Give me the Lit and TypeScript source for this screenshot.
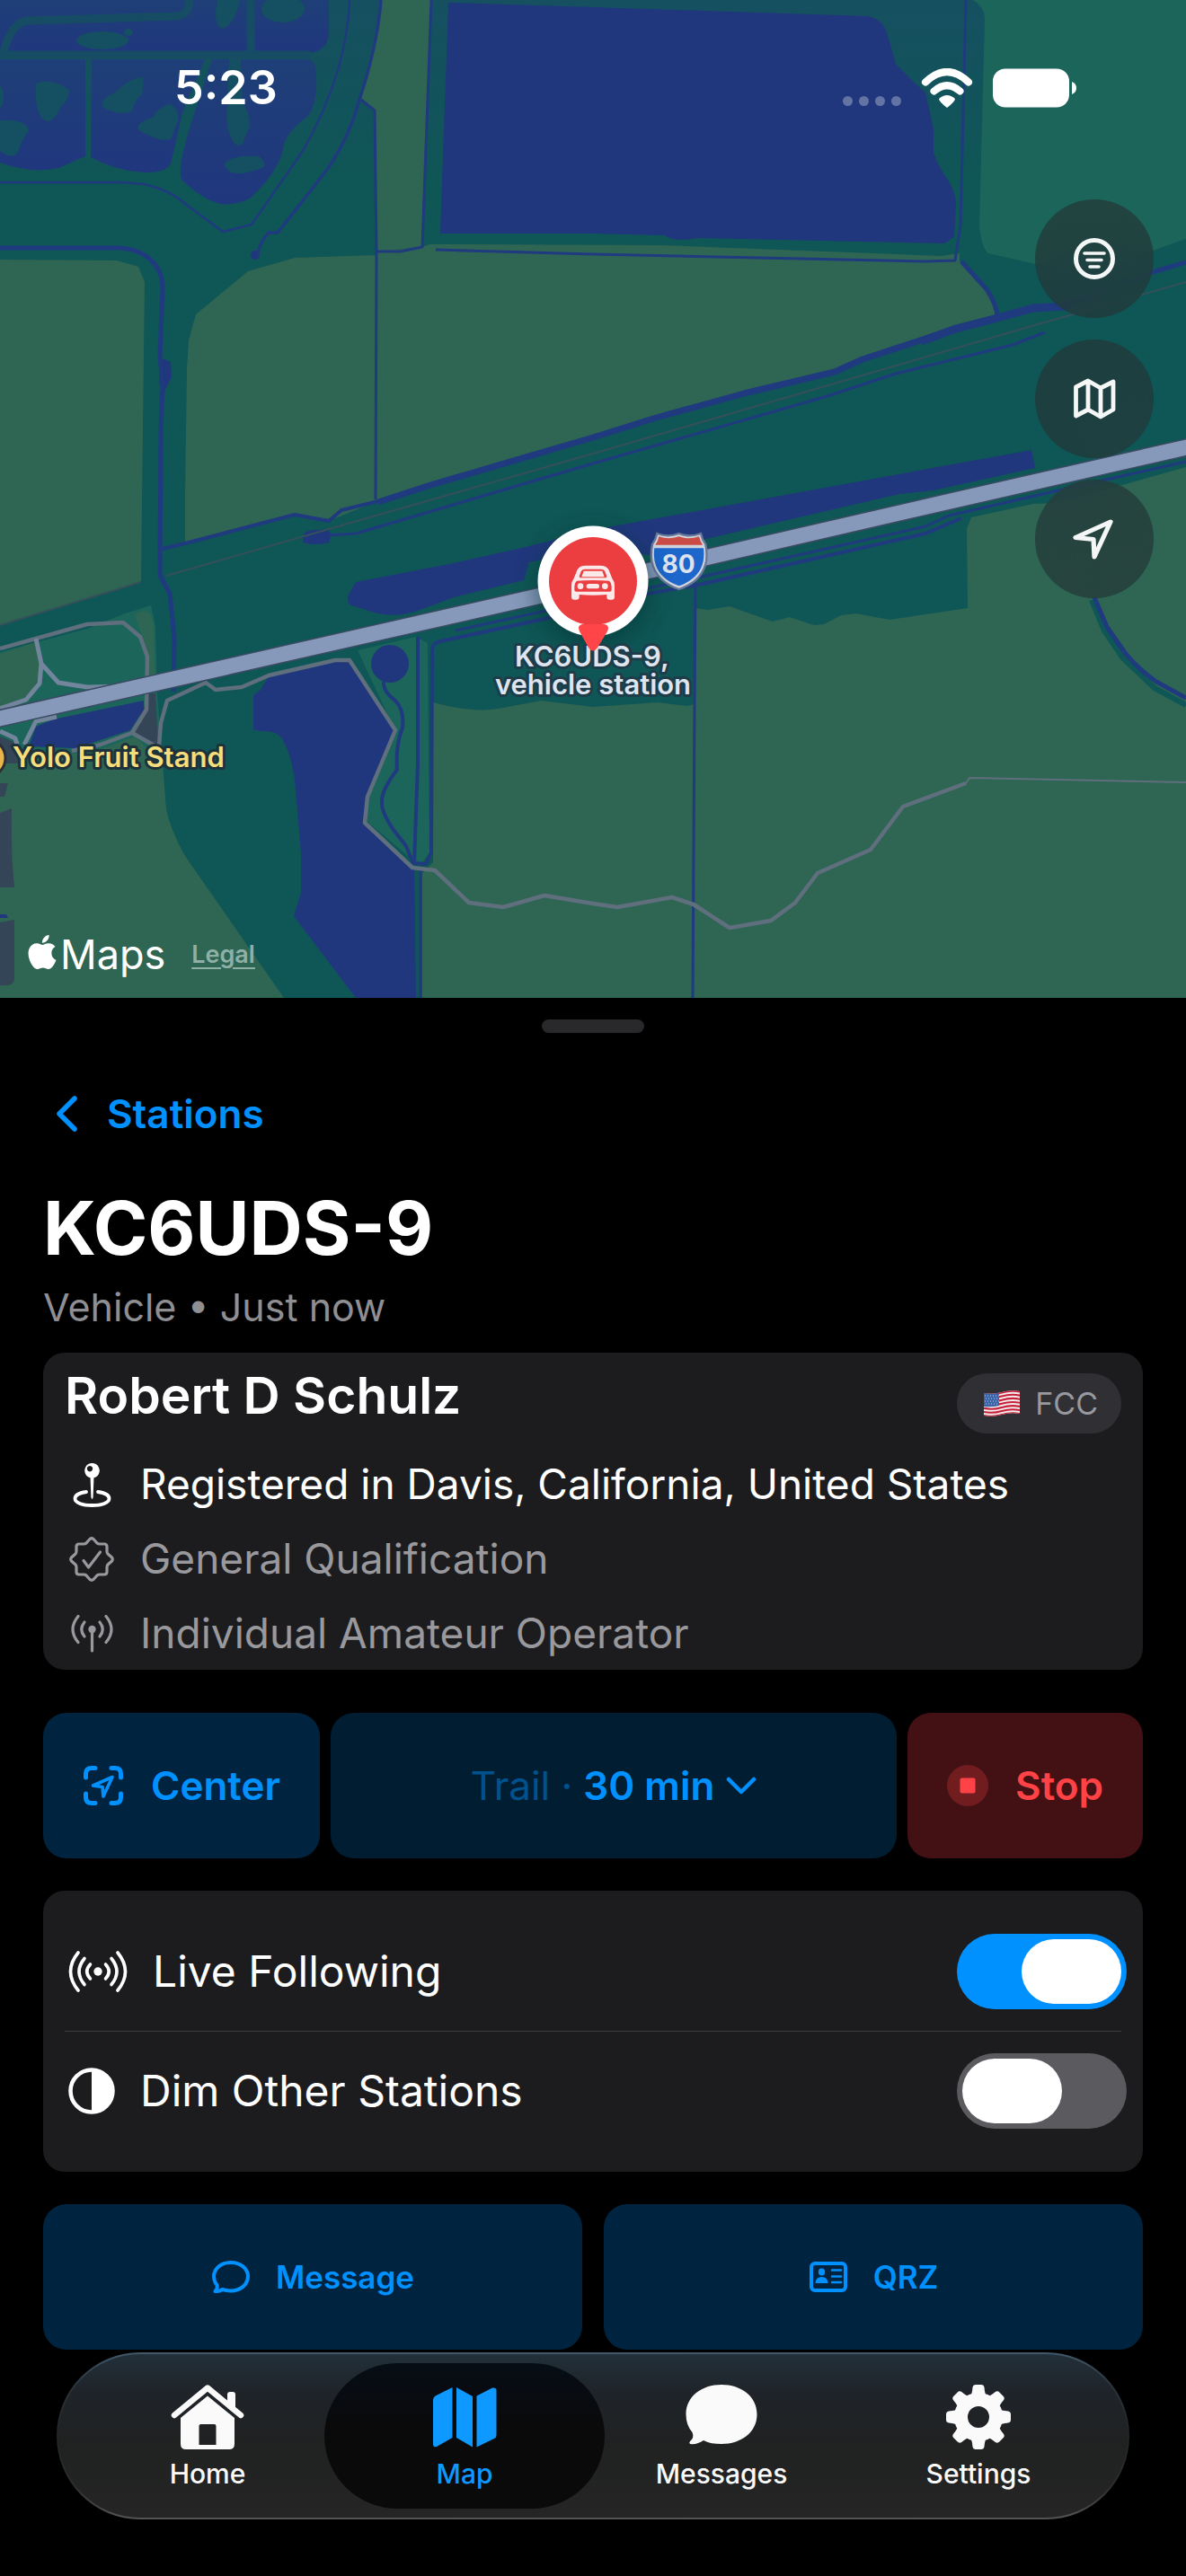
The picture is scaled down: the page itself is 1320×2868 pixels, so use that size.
import { LitElement, html, svg, css } from "lit";
import { customElement, property, state } from "lit/decorators.js";

const fontStack = css`"Inter", "Liberation Sans", sans-serif`;

/* ---------- icons ---------- */

const wifiIcon = html`<svg class="wifi" viewBox="0 0 58 44" aria-hidden="true">
  <g fill="none" stroke="#fff" stroke-width="8" stroke-linecap="round">
    <path d="M5 15.500Q29-7.500 53 15.500" />
    <path d="M14.500 25.500Q29 13 43.500 25.500" />
  </g>
  <path fill="#fff" d="M20 34Q29 26 38 34Q38 37 29 44Q20 37 20 34Z" />
</svg>`;

const batteryIcon = html`<svg class="battery" viewBox="0 0 94 44" aria-hidden="true">
  <rect x="0" y="0.500" width="85" height="43" rx="14" fill="#fff" />
  <path d="M88 15Q93 17 93 22T88 29Z" fill="#fff" />
</svg>`;

const filterIcon = html`<svg class="fab-icon" viewBox="0 0 50 50" aria-hidden="true">
  <g fill="none" stroke="#f5f7f7" stroke-linecap="round">
    <circle cx="25" cy="25" r="20.500" stroke-width="5" />
    <path stroke-width="3.600" d="M14 19H36M17 26.500H33M20 34H30" />
  </g>
</svg>`;

const mapOutlineIcon = html`<svg class="fab-icon" viewBox="0 0 50 50" aria-hidden="true">
  <path
    fill="none"
    stroke="#f5f7f7"
    stroke-width="4.800"
    stroke-linejoin="round"
    d="M4.500 12L18 5L32 13L46 6V37L32 45L18 37L4.500 44ZM18 5V37M32 13V45"
  />
</svg>`;

const locateIcon = html`<svg class="fab-icon" viewBox="0 0 50 50" aria-hidden="true">
  <path
    fill="none"
    stroke="#f5f7f7"
    stroke-width="5.200"
    stroke-linejoin="round"
    d="M43 6L4 23.500L24 25.500L25 45Z"
  />
</svg>`;

const backIcon = html`<svg class="back-icon" viewBox="0 0 26 42" aria-hidden="true">
  <path
    fill="none"
    stroke="currentColor"
    stroke-width="5.500"
    stroke-linecap="round"
    stroke-linejoin="round"
    d="M22 4L5 21L22 38"
  />
</svg>`;

const flagIcon = html`<svg class="flag" viewBox="0 0 40 29" aria-hidden="true">
  <defs>
    <clipPath id="flag-shape">
      <path d="M0 3Q10 5 20 2T40 1V26Q30 24 20 27T0 28Z" />
    </clipPath>
  </defs>
  <g clip-path="url(#flag-shape)">
    <rect width="40" height="29" fill="#f3eeee" />
    <g fill="none" stroke="#c8203a" stroke-width="2.100">
      ${[3.5, 7.6, 11.7, 15.8, 19.9, 24, 28].map(
        (y) => svg`<path d=${`M0 ${y}Q10 ${y + 2} 20 ${y - 1}T40 ${y - 2}`} />`
      )}
    </g>
    <path d="M0 2Q10 5 17 2.500V17Q8 19 0 18Z" fill="#3c64a8" />
    <g fill="none" stroke="#b9cbe6" stroke-width="1" stroke-dasharray="1 2">
      <path d="M1 6H17M2 9H17M1 12H17M2 15H17" />
    </g>
  </g>
</svg>`;

const pinIcon = html`<svg class="row-icon" viewBox="0 0 50 50" aria-hidden="true">
  <path
    fill="none"
    stroke="currentColor"
    stroke-width="3.800"
    stroke-linecap="round"
    d="M19 33C11 34 6.500 37 6.500 40.500C6.500 45 14.500 48 25.500 48S44.500 45 44.500 40.500C44.500 37 40 34 32 33"
  />
  <path fill="currentColor" d="M23.500 16H27.500L26.600 39Q25.500 43 24.400 39Z" />
  <path
    fill="currentColor"
    fill-rule="evenodd"
    d="M25.500 1a8.300 8.300 0 1 0 .01 0ZM23 4a3.200 3.200 0 1 1-.01 0Z"
  />
</svg>`;

const sealIcon = html`<svg class="row-icon" viewBox="0 0 50 50" aria-hidden="true">
  <g
    fill="none"
    stroke="currentColor"
    stroke-width="3.200"
    stroke-linejoin="round"
    stroke-linecap="round"
  >
    <path
      d="M27 2.500L31 7Q32 8 34 8H39Q42 8 42 11V16Q42 18 43 19L47.500 23Q49 25 47.500 27L43 31Q42 32 42 34V39Q42 42 39 42H34Q32 42 31 43L27 47.500Q25 49 23 47.500L19 43Q18 42 16 42H11Q8 42 8 39V34Q8 32 7 31L2.500 27Q1 25 2.500 23L7 19Q8 18 8 16V11Q8 8 11 8H16Q18 8 19 7L23 2.500Q25 1 27 2.500Z"
    />
    <path d="M16 26.500L21.500 34L34.500 17" />
  </g>
</svg>`;

const antennaIcon = html`<svg class="row-icon" viewBox="0 0 50 50" aria-hidden="true">
  <g fill="none" stroke="currentColor" stroke-width="3.200" stroke-linecap="round">
    <path d="M25.500 20V44" />
    <path d="M10 5.500Q-2 20 10 34.500M41 5.500Q53 20 41 34.500" />
    <path d="M17 12Q10.500 20 17 28M34 12Q40.500 20 34 28" />
  </g>
  <circle cx="25.500" cy="20" r="4.200" fill="currentColor" />
</svg>`;

const centerIcon = html`<svg class="action-icon" viewBox="0 0 46 46" aria-hidden="true">
  <g fill="none" stroke="currentColor" stroke-linecap="round" stroke-linejoin="round">
    <path
      stroke-width="5"
      d="M3.500 14V10Q3.500 3.500 10 3.500H14M32 3.500H36Q42.500 3.500 42.500 10V14M42.500 32V36Q42.500 42.500 36 42.500H32M14 42.500H10Q3.500 42.500 3.500 36V32"
    />
    <path stroke-width="3.600" d="M33 13.500L11.500 23L22 24.500L23 35Z" />
  </g>
</svg>`;

const stopIcon = html`<svg class="action-icon" viewBox="0 0 46 46" aria-hidden="true">
  <circle cx="23" cy="23" r="23" fill="#711d20" />
  <rect x="14.500" y="14.500" width="17" height="17" rx="2" fill="currentColor" />
</svg>`;

const chevronIcon = html`<svg class="chevron" viewBox="0 0 34 20" aria-hidden="true">
  <path
    fill="none"
    stroke="currentColor"
    stroke-width="4.500"
    stroke-linecap="round"
    stroke-linejoin="round"
    d="M3 3L17 17L31 3"
  />
</svg>`;

const liveIcon = html`<svg class="live-icon" viewBox="0 0 66 46" aria-hidden="true">
  <g fill="none" stroke="currentColor" stroke-width="3.600" stroke-linecap="round">
    <path d="M11 2Q-6 23 11 44M55 2Q72 23 55 44" />
    <path d="M18 8.500Q6 23 18 37.500M48 8.500Q60 23 48 37.500" />
    <path d="M24.500 15Q17 23 24.500 31M41.500 15Q49 23 41.500 31" />
  </g>
  <circle cx="33" cy="23" r="4.700" fill="currentColor" />
</svg>`;

const dimIcon = html`<svg class="dim-icon" viewBox="0 0 52 52" aria-hidden="true">
  <circle cx="26" cy="26" r="23.500" fill="none" stroke="currentColor" stroke-width="4.500" />
  <path d="M26 3A23 23 0 0 1 26 49Z" fill="currentColor" />
</svg>`;

const bubbleOutlineIcon = html`<svg class="link-icon" viewBox="0 0 44 38" aria-hidden="true">
  <path
    fill="none"
    stroke="currentColor"
    stroke-width="4"
    stroke-linejoin="round"
    d="M22 3C32.500 3 41 9.500 41 18.500S32.500 34.500 22 34.500C18.500 34.500 15.500 34 12.500 33Q9 35.500 4.500 35Q7.500 32 6.500 28Q3 24 3 18.500C3 9.500 11.500 3 22 3Z"
  />
</svg>`;

const cardIcon = html`<svg class="link-icon" viewBox="0 0 44 38" aria-hidden="true">
  <rect x="3" y="4" width="38" height="30" rx="4" fill="none" stroke="currentColor" stroke-width="4" />
  <ellipse cx="14.500" cy="13.500" rx="3.700" ry="4" fill="currentColor" />
  <path d="M7.500 26Q8 19 14.500 19T21.500 26Z" fill="currentColor" />
  <path d="M26 11.500H36M26 18.500H36M26 25H36" stroke="currentColor" stroke-width="2.400" stroke-linecap="round" />
</svg>`;

const homeIcon = html`<svg class="tab-icon" viewBox="0 0 82 72" aria-hidden="true">
  <path
    fill="none"
    stroke="currentColor"
    stroke-width="6.500"
    stroke-linecap="round"
    stroke-linejoin="round"
    d="M4 34L41 3.500L78 34"
  />
  <path fill="currentColor" d="M63 26V11Q63 8 66 8H69Q72 8 72 11V30Z" />
  <path
    fill="currentColor"
    fill-rule="evenodd"
    d="M41 12.500L71 37V66Q71 72 65 72H17Q11 72 11 66V37ZM31.500 67H50.500V46Q50.500 44 48.500 44H33.500Q31.500 44 31.500 46Z"
  />
</svg>`;

const mapFilledIcon = html`<svg class="tab-icon" viewBox="0 0 82 72" aria-hidden="true">
  <path
    fill="currentColor"
    d="M27.500 3V59L10 69Q6 70 6 66V17Q6 14 8.500 12.500ZM32 3L50 13V69.500L32 59ZM54.500 12.500L72 3.500Q76.500 3 76.500 6V56Q76.500 59 74 60L54.500 69.500Z"
  />
</svg>`;

const bubbleFilledIcon = html`<svg class="tab-icon" viewBox="0 0 82 72" aria-hidden="true">
  <path
    fill="currentColor"
    d="M41 0C63 0 80.500 13 80.500 33S63 66 41 66C33 66 27 65 21 62Q14 67 6 66Q4.500 65 6 63Q11 59 8.500 53Q1.500 45 1.500 33C1.500 13 19 0 41 0Z"
  />
</svg>`;

const gearIcon = html`<svg class="tab-icon" viewBox="0 0 82 72" aria-hidden="true">
  <g fill="currentColor">
    ${[0, 45, 90, 135, 180, 225, 270, 315].map(
      (angle) =>
        svg`<path transform=${`rotate(${angle} 41 36)`} d="M31 14Q34 11 34.500 3Q35 0 38 0H44Q47 0 47.500 3Q48 11 51 14Z" />`
    )}
  </g>
  <circle cx="41" cy="36" r="19.500" fill="none" stroke="currentColor" stroke-width="15" />
</svg>`;

const appleMark = html`<svg class="apple" viewBox="0 0 24 24" aria-hidden="true">
  <path
    fill="#fff"
    d="M12.152 6.896c-.948 0-2.415-1.078-3.960-1.040-2.040.027-3.910 1.183-4.961 3.014-2.117 3.675-.546 9.103 1.519 12.090 1.013 1.454 2.208 3.090 3.792 3.039 1.520-.065 2.090-.987 3.935-.987 1.831 0 2.350.987 3.960.948 1.637-.026 2.676-1.480 3.676-2.948 1.156-1.688 1.636-3.325 1.662-3.415-.039-.013-3.182-1.221-3.220-4.857-.026-3.040 2.480-4.494 2.597-4.559-1.429-2.090-3.623-2.324-4.390-2.376-2-.156-3.675 1.090-4.610 1.090zM15.530 3.830c.843-1.012 1.400-2.427 1.245-3.830-1.207.052-2.662.805-3.532 1.818-.780.896-1.454 2.338-1.273 3.714 1.338.104 2.715-.688 3.559-1.701"
  />
</svg>`;

/* ---------- map ---------- */

const mapDrawing = html`<svg
  class="canvas"
  viewBox="0 0 1320 1111"
  preserveAspectRatio="xMidYMid slice"
  role="img"
  aria-label="Map around Interstate 80"
>
  <defs>
    <linearGradient id="suburb" x1="0" y1="0" x2="0" y2="1">
      <stop offset="0" stop-color="#1e3f77" />
      <stop offset="1" stop-color="#20377e" />
    </linearGradient>
    <linearGradient id="sky" x1="0" y1="0" x2="0" y2="1">
      <stop offset="0" stop-color="#1c4a6c" stop-opacity="0.500" />
      <stop offset="1" stop-color="#1c4a6c" stop-opacity="0" />
    </linearGradient>
    <filter id="glow" x="-50%" y="-50%" width="200%" height="200%">
      <feGaussianBlur stdDeviation="12" />
    </filter>
  </defs>

  <rect width="1320" height="1111" fill="#0f5656" />
  <rect width="1100" height="200" fill="url(#sky)" />

  <!-- parks -->
  <g fill="#1c655a">
    <path d="M1083 0Q1096 8 1096 21L1090 250Q1092 276 1100 282L1152 294L1283 279L1320 266V0Z" />
    <path d="M0 726L97 700L139 683L168 674L173 698L175 772L180 835L0 850Z" />
    <path d="M398 724L463 709L476 716L478 950L467 964L408 914L410 883L440 814Z" />
  </g>

  <!-- fields -->
  <g fill="#2f6553">
    <path d="M0 289L130 290L154 297L161 314L158 560L157 648L0 696Z" />
    <path d="M425 0H480L470 275L419 280L417 123L402 111Z" />
    <path
      d="M478 272L738 273L1047 285L1068 282V291L1102 325L1110 354L1064 366L929 414L828 438L727 466L660 487L476 541L417 559L366 580L328 573L206 605V550L208 411L210 379L218 350L276 302L328 287L419 284V280L470 275Z"
    />
    <path d="M0 728L42 714L46 745L32 780L0 788Z" />
    <path d="M150 684Q170 672 171 700L173 765L166 766L165 730Z" />
    <path d="M0 850L110 835L150 820L181 850L185 901Q190 925 206 953L316 1111H0Z" />
    <path d="M482 782Q530 795 560 788L602 780L660 787L732 782L765 786L772 784V1111H470V972L482 960Z" />
    <path
      d="M774 677L788 679L812 675L860 692L879 687L906 696L917 695L936 685L953 683L990 690L1077 677L1076 589L1081 576L1150 561L1178 560L1320 520V1111H772Z"
    />
  </g>

  <!-- built-up blocks -->
  <g fill="#344558">
    <path d="M0 872H9L5 887H0ZM0 905L13 900Q12 950 16 988H0ZM0 1027L16 1024V1090Q15 1097 8 1097H0Z" />
    <path d="M0 820L20 828L28 850H0ZM166 772H173L176 830L149 815Z" />
  </g>

  <!-- suburb with lagoons -->
  <g fill="url(#suburb)">
    <path d="M0 0H366V39Q364 56 345 59H0Z" />
    <path d="M0 66H95V174Q85 178 66 187Q36 194 0 181Z" />
    <path d="M102 66H228L203 125L191 179Q188 193 160 192Q128 190 101 175Z" />
    <path d="M236 66H341Q350 66 351 75Q356 110 343 129Q320 146 316 161Q312 190 278 221Q262 229 245 227Q225 222 202 200Q196 185 219 118Z" />
  </g>
  <g fill="none" stroke="#174d64" stroke-width="9">
    <path d="M210 0Q212 16 196 18L30 23Q12 26 4 58" />
    <path d="M279 0V60M0 61H345" />
  </g>
  <g fill="#155062">
    <path d="M242 0Q236 28 248 32Q262 26 267 0Z" />
    <ellipse cx="315" cy="10" rx="24" ry="15" />
    <ellipse cx="114" cy="45" rx="29" ry="10" />
    <ellipse cx="143" cy="36" rx="5" ry="4" />
    <ellipse cx="0" cy="108" rx="4" ry="12" />
    <path d="M40 93Q58 86 77 100Q76 114 68 117Q62 135 52 135Q38 130 40 93Z" />
    <path d="M160 86L158 105Q150 110 147 124Q130 129 114 119Q112 110 128 103Q145 86 160 86Z" />
    <path d="M188 116Q200 120 198 135L190 155L180 156Q155 148 153 142Q156 134 170 131Q175 120 188 116Z" />
    <path d="M255 66H268L270 115Q278 125 278 140L270 160Q263 165 258 155Q250 140 253 118Z" />
    <path d="M250 182Q258 172 288 174Q296 180 294 186Q270 196 258 192Q250 188 250 182Z" />
    <path d="M0 134Q30 132 32 146Q24 155 20 170Q12 178 0 168Z" />
  </g>

  <!-- water -->
  <g fill="#20377d">
    <path
      d="M499 3L660 8L967 18Q984 22 988 40L997 71Q1015 90 1030 103Q1035 125 1039 143V170Q1044 185 1056 202Q1064 215 1064 229L1062 264L1051 271L778 265L761 267Q745 267 740 262L660 260H490Z"
    />
    <path
      d="M396 648L500 628L585 609L660 590L841 557L1148 501L1152 521L1039 546L1001 550L786 600L723 618L660 612L589 626L583 646L505 665L470 678Q446 688 420 683L391 674Q384 670 389 660Z"
    />
    <path
      d="M299 753L373 735L389 737L439 813L408 887L405 916L461 968L463 1111H396L327 1020L335 994V950L328 868Q324 840 316 827Q312 813 290 814Q282 812 282 812V774L290 768Z"
    />
    <path d="M40 809L59 801L160 780V790L145 813L84 833L32 831Z" />
    <path d="M0 1018H7L9 1022H0Z" />
    <path d="M337 596Q340 590 352 590Q366 588 369 594L366 604Q350 608 337 604Z" />
    <path d="M178 398L190 403L191 420L182 438L177 425Z" />
    <circle cx="434" cy="739" r="21" />
    <circle cx="284" cy="284" r="5" />
  </g>
  <g fill="none" stroke="#0f5656" stroke-width="6">
    <path d="M1215 668L1229 702L1250 733L1285 766L1320 785" />
  </g>
  <g fill="none" stroke="#203a7f" stroke-linejoin="round">
    <path
      stroke-width="2.500"
      d="M389 0Q388 35 377 75Q362 125 337 168L280 250L248 258L206 227Q190 212 160 205L135 203H0"
    />
    <path stroke-width="3.500" d="M424 0Q420 50 400 111Q390 150 366 186Q340 220 309 259H299Q290 268 286 284" />
    <path stroke-width="3" d="M402 111L417 123L419 280L418 556M480 0L470 275L445 280H419" />
    <path stroke-width="3" d="M485 278L660 283L1030 291L1063 290L1069 250L1075 0" />
    <path stroke-width="5" d="M1070 291L1098 322Q1110 340 1110 354" />
    <path stroke-width="4" d="M181 611L206 605L328 573L366 580L380 568L421 558L476 541" />
    <path stroke-width="7" d="M421 559L476 541L660 487L727 466L828 438L929 414L960 400L1064 366L1110 354" />
    <path stroke-width="9" d="M1025 380L1064 366L1110 354L1150 343L1184 341L1225 325" />
    <path stroke-width="5" d="M1225 325L1283 303L1320 292" />
    <path stroke-width="3" d="M1163 370L1127 384L997 416L921 441L660 516L396 594L366 596" />
    <path
      stroke-width="5"
      d="M0 276H130Q150 276 164 286Q181 300 181 320L178 396L181 430L179 482L178 640L189 661L194 709L193 770"
    />
    <path
      stroke-width="3"
      d="M1320 514L1178 546L1056 574L1030 586L786 641L721 655L507 702"
    />
    <path
      stroke-width="4"
      d="M1070 577L1030 594L782 650L721 661L606 689L490 714Q481 716 481 724L480 949L474 962L461 961L465 850V709"
    />
    <path stroke-width="4" d="M427 759Q426 770 440 780Q450 790 448 810Q440 830 442 857Q424 880 425 894Q425 905 438 924L452 942L460 961" />
    <path stroke-width="3" d="M468 968V1111M774 650L773 787L771 1111" />
    <path stroke-width="5" d="M1218 665L1232 698L1253 728Q1268 746 1287 759L1320 777" />
  </g>

  <!-- railway and minor roads -->
  <g fill="none" stroke="#35505b" stroke-width="2">
    <path d="M1320 314L1152 362L660 505L366 589L185 641M0 696L157 648" />
  </g>
  <g fill="none" stroke="#5f6f7e" stroke-width="4.500" stroke-linejoin="round">
    <path
      d="M177 831L179 805L186 780L229 760L240 768L269 765L299 752L373 735H389L440 813L409 887L406 916L459 966L484 969L522 1005L560 1010L606 997L660 1006L687 1010L748 999L772 1007L812 1033L858 1025L885 1005L910 972L969 946L1005 898L1075 872"
    />
    <path stroke-width="2" d="M1075 872L1079 866L1320 871" />
    <path d="M0 722L97 695L137 693L156 709L164 731L163 790L147 816L112 829L80 836M147 816L177 833" />
  </g>
  <g fill="none" stroke="#73849d" stroke-width="5" stroke-linejoin="round">
    <path d="M40 711L46 739L44 761L29 779L0 789M46 739L65 760L97 765L140 764M63 798L40 803L27 829M0 814L17 822L20 832" />
  </g>

  <!-- interstate -->
  <path d="M-5 801L598 664L1049 560L1325 497" fill="none" stroke="#3a4b62" stroke-width="20" />
  <path d="M-5 801L598 664L1049 560L1325 497" fill="none" stroke="#8799bb" stroke-width="17" />

  <g transform="translate(530 560) scale(0.33333)">
    <path
      d="M604 102Q640 116 677 102Q714 116 750 102Q754 122 766 138Q772 170 768 195Q755 262 677 288Q600 262 586 195Q582 170 588 138Q600 122 604 102Z"
      fill="#d0d4dc"
      stroke="#66789a"
      stroke-width="7"
    />
    <path d="M610 112Q642 124 677 112Q712 124 744 112Q748 128 756 140H598Q608 128 610 112Z" fill="#cb4b45" />
    <path d="M595 151H759Q762 175 758 195Q746 252 677 277Q608 252 596 195Q592 175 595 151Z" fill="#1c66cc" />
  </g>
  <text class="shield" x="755" y="638" text-anchor="middle">80</text>

  <!-- point of interest -->
  <circle cx="-15" cy="844" r="21" fill="#e9b54a" stroke="#2a2f33" stroke-width="3" />
  <text class="poi" x="14" y="854">Yolo Fruit Stand</text>

  <!-- station marker -->
  <circle cx="660" cy="655" r="64" fill="#04302f" opacity="0.500" filter="url(#glow)" />
  <text class="callout" x="659" y="742" text-anchor="middle">KC6UDS-9,</text>
  <text class="callout" x="660" y="773" text-anchor="middle">vehicle station</text>
  <circle cx="660" cy="647" r="61.500" fill="#fff" />
  <circle cx="660" cy="647" r="49" fill="#ec3e41" />
  <path d="M648 695H673Q679 696 676 703L665 721Q660 728 655 721L645 703Q642 696 648 695Z" fill="#ff4548" />
  <g transform="translate(530 560) scale(0.33333)">
    <path
      fill="#fbe9e9"
      fill-rule="evenodd"
      d="M366 209H414Q434 209 442 222L454 252Q462 262 462 276V314Q462 323 452 323H446Q436 323 436 314V306Q390 310 344 306V314Q344 323 334 323H328Q318 323 318 314V276Q318 262 326 252L338 222Q346 209 366 209ZM336 260Q328 266 328 278V290Q328 296 334 296H446Q452 296 452 290V278Q452 266 444 260Q390 256 336 260ZM362 221Q353 221 350 229L344 245Q344 250 350 250H430Q436 250 436 245L430 229Q427 221 418 221Z"
    />
    <path fill="#fbe9e9" d="M359 227H421L428 247H352Z" />
    <circle cx="348" cy="278" r="10" fill="#fbe9e9" />
    <circle cx="430" cy="278" r="10" fill="#fbe9e9" />
    <rect x="368" y="270" width="43" height="16" rx="8" fill="#fbe9e9" />
  </g>
</svg>`;

@customElement("station-map")
export class StationMap extends LitElement {
  static styles = css`
    :host {
      display: flex;
      flex-direction: column;
      position: relative;
      overflow: hidden;
      color: #fff;
      font-family: ${fontStack};
    }
    .canvas {
      position: absolute;
      inset: 0;
      width: 100%;
      height: 100%;
    }
    .poi,
    .callout {
      font-size: 31px;
      font-weight: 600;
      paint-order: stroke;
      stroke-width: 6px;
      stroke-linejoin: round;
    }
    .poi {
      fill: #f5de7b;
      stroke: #1d323b;
    }
    .callout {
      fill: #dfe5ee;
      stroke: #1e3c4a;
    }
    .shield {
      font-size: 28px;
      font-weight: 700;
      fill: #dce2ee;
    }
    .status {
      position: relative;
      display: flex;
      justify-content: space-between;
      align-items: center;
      padding: 66px 121px 0 194px;
    }
    .time {
      font-size: 52px;
      font-weight: 600;
      line-height: 64px;
    }
    .signals {
      display: flex;
      align-items: center;
      gap: 22px;
    }
    .dots {
      display: flex;
      gap: 7px;
      padding-top: 28px;
    }
    .dot {
      width: 11px;
      height: 11px;
      border-radius: 50%;
      background: rgba(255, 255, 255, 0.3);
    }
    .wifi {
      width: 58px;
      height: 44px;
    }
    .battery {
      width: 94px;
      height: 44px;
    }
    .controls {
      position: relative;
      display: flex;
      flex-direction: column;
      align-items: flex-end;
      gap: 24px;
      padding: 92px 36px 0;
    }
    .fab {
      display: grid;
      place-items: center;
      width: 132px;
      height: 132px;
      padding: 0;
      border: 0;
      border-radius: 50%;
      background: rgba(35, 54, 54, 0.7);
      backdrop-filter: blur(30px);
    }
    .fab-icon {
      width: 50px;
      height: 50px;
    }
    .credits {
      position: relative;
      display: flex;
      align-items: center;
      gap: 29px;
      margin-top: auto;
      padding: 0 28px 18px;
    }
    .brand {
      display: flex;
      align-items: baseline;
      gap: 1px;
      font-size: 45px;
      line-height: 60px;
    }
    .apple {
      width: 38px;
      height: 38px;
    }
    .legal {
      color: #8fb0a6;
      font-size: 27px;
      font-weight: 600;
      line-height: 60px;
      text-underline-offset: 5px;
    }
  `;

  render() {
    return html`
      ${mapDrawing}
      <header class="status">
        <span class="time">5:23</span>
        <div class="signals">
          <div class="dots">
            <span class="dot"></span><span class="dot"></span><span class="dot"></span><span class="dot"></span>
          </div>
          ${wifiIcon} ${batteryIcon}
        </div>
      </header>
      <div class="controls">
        <button class="fab" aria-label="Filter">${filterIcon}</button>
        <button class="fab" aria-label="Map style">${mapOutlineIcon}</button>
        <button class="fab" aria-label="My location">${locateIcon}</button>
      </div>
      <footer class="credits">
        <span class="brand">${appleMark}Maps</span>
        <a class="legal" href="#legal">Legal</a>
      </footer>
    `;
  }
}

/* ---------- tab bar ---------- */

const tabs = [
  { id: "home", label: "Home", icon: homeIcon },
  { id: "map", label: "Map", icon: mapFilledIcon },
  { id: "messages", label: "Messages", icon: bubbleFilledIcon },
  { id: "settings", label: "Settings", icon: gearIcon },
];

@customElement("tab-bar")
export class TabBar extends LitElement {
  @property() current = "map";

  static styles = css`
    :host {
      display: block;
      font-family: ${fontStack};
    }
    .bar {
      display: grid;
      grid-template-columns: repeat(4, 1fr);
      padding: 10px 23px;
      border: 2px solid transparent;
      border-radius: 93px;
      background:
        linear-gradient(#22303a, #1f242a 22%, #202121 55%, #252525) padding-box,
        linear-gradient(#41596b, #2a343b 20%, #222424 50%, #2c2c2c 80%, #545556) border-box;
    }
    .tab {
      display: flex;
      flex-direction: column;
      align-items: center;
      gap: 9px;
      height: 138px;
      padding-top: 24px;
      margin: 0 -13px;
      border-radius: 81px;
      color: #fafafa;
      font-size: 30px;
      font-weight: 500;
      line-height: 36px;
      text-decoration: none;
    }
    .selected {
      background: linear-gradient(#060d16, #0a0a0b 40%);
      color: #0d99ff;
    }
    .tab-icon {
      width: 82px;
      height: 72px;
    }
  `;

  render() {
    return html`<nav class="bar">
      ${tabs.map(
        (tab) => html`<a class=${tab.id === this.current ? "tab selected" : "tab"} href="#${tab.id}">
          ${tab.icon}<span>${tab.label}</span>
        </a>`
      )}
    </nav>`;
  }
}

/* ---------- page ---------- */

@customElement("app-root")
export class AppRoot extends LitElement {
  @state() private following = true;
  @state() private dimmed = false;

  static styles = css`
    :host {
      display: flex;
      flex-direction: column;
      min-height: 100vh;
      background: #000;
      color: #fff;
      font-family: ${fontStack};
    }
    station-map {
      flex: 1;
      min-height: 800px;
    }
    .sheet {
      display: flex;
      flex-direction: column;
      padding: 24px 48px 3px;
    }
    .handle {
      align-self: center;
      width: 114px;
      height: 15px;
      border-radius: 8px;
      background: #29292b;
    }
    .back {
      display: flex;
      align-items: center;
      align-self: flex-start;
      gap: 32px;
      margin-top: 60px;
      padding: 0 13px;
      color: #0091ff;
      font-size: 44px;
      font-weight: 600;
      line-height: 60px;
      text-decoration: none;
    }
    .back-icon {
      width: 26px;
      height: 42px;
    }
    .callsign {
      margin: 48px 0 0;
      font-size: 82px;
      font-weight: 700;
      line-height: 100px;
    }
    .meta {
      margin: 9px 0 0;
      color: #8e8e93;
      font-size: 43px;
      line-height: 56px;
    }
    .card {
      border-radius: 24px;
      background: #1c1c1e;
    }
    .operator {
      margin-top: 23px;
      padding: 23px 24px 11px;
    }
    .operator-head {
      display: flex;
      justify-content: space-between;
      align-items: flex-start;
    }
    .name {
      margin: 0;
      font-size: 57px;
      font-weight: 600;
      line-height: 50px;
    }
    .badge {
      display: flex;
      align-items: center;
      gap: 17px;
      padding: 0 26px 0 30px;
      border-radius: 34px;
      background: #303034;
      color: #98989f;
      font-size: 34px;
      line-height: 67px;
    }
    .flag {
      width: 40px;
      height: 29px;
    }
    .facts {
      display: flex;
      flex-direction: column;
      gap: 24px;
      margin: 27px 0 0;
      padding: 0;
      list-style: none;
      font-size: 46px;
      line-height: 59px;
    }
    .fact {
      display: flex;
      align-items: center;
      gap: 29px;
      padding-left: 5px;
    }
    .muted {
      color: #98989d;
    }
    .row-icon {
      width: 50px;
      height: 50px;
    }
    .actions {
      display: grid;
      grid-template-columns: auto 1fr auto;
      gap: 12px;
      margin-top: 48px;
    }
    .action {
      display: flex;
      justify-content: center;
      align-items: center;
      gap: 30px;
      height: 162px;
      padding: 0 44px;
      border: 0;
      border-radius: 26px;
      background: #00243f;
      color: #0091ff;
      font-family: inherit;
      font-size: 44px;
      font-weight: 600;
      text-decoration: none;
    }
    .action-icon {
      width: 46px;
      height: 46px;
    }
    .trail {
      gap: 12px;
      background: #001d32;
    }
    .trail-label {
      color: #00528f;
      font-weight: 400;
    }
    .trail-select {
      margin: 0;
      padding: 0;
      border: 0;
      appearance: none;
      background: none;
      color: inherit;
      font: inherit;
    }
    .chevron {
      width: 34px;
      height: 20px;
    }
    .stop {
      background: #431113;
      color: #ff4245;
    }
    .options {
      margin-top: 36px;
      padding: 48px 18px 48px 24px;
    }
    .option {
      display: flex;
      align-items: center;
      padding-left: 4px;
      font-size: 48px;
      line-height: 84px;
    }
    .option-label {
      display: flex;
      flex: 1;
      align-items: center;
      gap: 28px;
    }
    .live-icon {
      width: 66px;
      height: 46px;
    }
    .dim-icon {
      width: 52px;
      height: 52px;
    }
    .divider {
      height: 1px;
      margin: 24px 6px 24px 0;
      border: 0;
      background: #3d3d40;
    }
    .switch {
      width: 189px;
      height: 84px;
      margin: 0;
      padding: 6px;
      border-radius: 42px;
      appearance: none;
      background: #5b5b5f;
    }
    .switch::before {
      content: "";
      display: block;
      width: 111px;
      height: 72px;
      border-radius: 36px;
      background: #fff;
    }
    .switch:checked {
      background: #0091ff;
    }
    .switch:checked::before {
      margin-left: auto;
    }
    .links {
      display: grid;
      grid-template-columns: 1fr 1fr;
      gap: 24px;
      margin-top: 36px;
    }
    .link {
      gap: 28px;
      font-size: 35px;
    }
    .link-icon {
      width: 44px;
      height: 38px;
    }
    tab-bar {
      margin: 0 63px 63px;
    }
  `;

  render() {
    return html`
      <station-map></station-map>
      <main class="sheet">
        <div class="handle"></div>
        <a class="back" href="#stations">${backIcon}Stations</a>
        <h1 class="callsign">KC6UDS-9</h1>
        <p class="meta">Vehicle • Just now</p>

        <section class="card operator">
          <div class="operator-head">
            <h2 class="name">Robert D Schulz</h2>
            <span class="badge">${flagIcon}FCC</span>
          </div>
          <ul class="facts">
            <li class="fact">${pinIcon}Registered in Davis, California, United States</li>
            <li class="fact muted">${sealIcon}General Qualification</li>
            <li class="fact muted">${antennaIcon}Individual Amateur Operator</li>
          </ul>
        </section>

        <div class="actions">
          <button class="action">${centerIcon}Center</button>
          <div class="action trail">
            <label class="trail-label" for="trail">Trail ·</label>
            <select class="trail-select" id="trail">
              <option>30 min</option>
            </select>
            ${chevronIcon}
          </div>
          <button class="action stop">${stopIcon}Stop</button>
        </div>

        <section class="card options">
          <div class="option">
            <label class="option-label" for="following">${liveIcon}Live Following</label>
            <input
              class="switch"
              id="following"
              type="checkbox"
              .checked=${this.following}
              @change=${(e: Event) => (this.following = (e.target as HTMLInputElement).checked)}
            />
          </div>
          <hr class="divider" />
          <div class="option">
            <label class="option-label" for="dimmed">${dimIcon}Dim Other Stations</label>
            <input
              class="switch"
              id="dimmed"
              type="checkbox"
              .checked=${this.dimmed}
              @change=${(e: Event) => (this.dimmed = (e.target as HTMLInputElement).checked)}
            />
          </div>
        </section>

        <div class="links">
          <button class="action link">${bubbleOutlineIcon}Message</button>
          <a class="action link" href="#qrz">${cardIcon}QRZ</a>
        </div>
      </main>
      <tab-bar current="map"></tab-bar>
    `;
  }
}
